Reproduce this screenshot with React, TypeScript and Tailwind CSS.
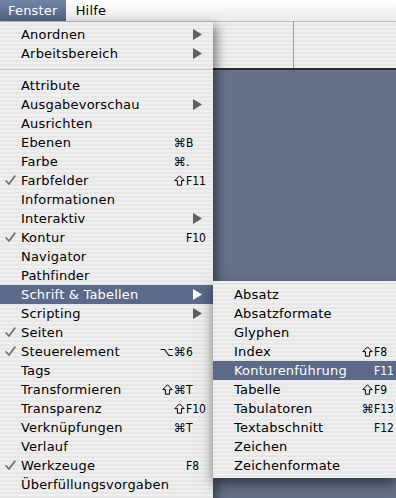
import React from 'react';

interface MenuItem {
  label: string;
  check?: boolean;
  arrow?: boolean;
  mod?: string;
  keyName?: string;
  sepBefore?: boolean;
  active?: boolean;
}

const mainItems: MenuItem[] = [
  { label: 'Anordnen', arrow: true },
  { label: 'Arbeitsbereich', arrow: true },
  { label: 'Attribute', sepBefore: true },
  { label: 'Ausgabevorschau', arrow: true },
  { label: 'Ausrichten' },
  { label: 'Ebenen', mod: '⌘', keyName: 'B' },
  { label: 'Farbe', mod: '⌘', keyName: '.' },
  { label: 'Farbfelder', check: true, mod: '⇧', keyName: 'F11' },
  { label: 'Informationen' },
  { label: 'Interaktiv', arrow: true },
  { label: 'Kontur', check: true, keyName: 'F10' },
  { label: 'Navigator' },
  { label: 'Pathfinder' },
  { label: 'Schrift & Tabellen', arrow: true, active: true },
  { label: 'Scripting', arrow: true },
  { label: 'Seiten', check: true },
  { label: 'Steuerelement', check: true, mod: '⌥⌘', keyName: '6' },
  { label: 'Tags' },
  { label: 'Transformieren', mod: '⇧⌘', keyName: 'T' },
  { label: 'Transparenz', mod: '⇧', keyName: 'F10' },
  { label: 'Verknüpfungen', mod: '⌘', keyName: 'T' },
  { label: 'Verlauf' },
  { label: 'Werkzeuge', check: true, keyName: 'F8' },
  { label: 'Überfüllungsvorgaben' },
];

const subItems: MenuItem[] = [
  { label: 'Absatz' },
  { label: 'Absatzformate' },
  { label: 'Glyphen' },
  { label: 'Index', mod: '⇧', keyName: 'F8' },
  { label: 'Konturenführung', keyName: 'F11', active: true },
  { label: 'Tabelle', mod: '⇧', keyName: 'F9' },
  { label: 'Tabulatoren', mod: '⌘', keyName: 'F13' },
  { label: 'Textabschnitt', keyName: 'F12' },
  { label: 'Zeichen' },
  { label: 'Zeichenformate' },
];

const stripes =
  'bg-[image:repeating-linear-gradient(180deg,#efefef_0px,#efefef_2px,#e7e7e7_2px,#e7e7e7_4px)]';

const Check = ({ active }: { active?: boolean }) => (
  <svg width="11" height="11" viewBox="0 0 11 11" className="ml-[5px]">
    <path
      d="M1.2 6 L4 9 L9.8 1.2"
      fill="none"
      stroke={active ? '#fff' : '#707070'}
      strokeWidth="1.8"
      strokeLinecap="round"
      strokeLinejoin="round"
    />
  </svg>
);

const Arrow = ({ active }: { active?: boolean }) => (
  <svg width="9" height="11" viewBox="0 0 9 11" className="ml-[7px]">
    <polygon points="0,0 9,5.5 0,11" fill={active ? '#fff' : '#5f5f5f'} />
  </svg>
);

// outline shift arrow, as drawn in classic Mac menus
const Shift = ({ active }: { active?: boolean }) => (
  <svg width="11" height="11" viewBox="0 0 11 11" className="mr-[1px]">
    <path
      d="M5.5 0.8 L10.2 5.6 L7.6 5.6 L7.6 10.2 L3.4 10.2 L3.4 5.6 L0.8 5.6 Z"
      fill="none"
      stroke={active ? '#fff' : '#000'}
      strokeWidth="1"
      strokeLinejoin="miter"
    />
  </svg>
);

const Modifiers = ({ mod, active }: { mod: string; active?: boolean }) => (
  <span className="flex items-center text-[12px]">
    {mod.split('').map((m, i) =>
      m === '⇧' ? <Shift key={i} active={active} /> : <span key={i}>{m}</span>
    )}
  </span>
);

const Row = ({ item, keyWidth }: { item: MenuItem; keyWidth: string }) => (
  <div
    className={`flex h-[19px] items-center whitespace-nowrap ${
      item.active ? 'bg-[#5a6a88] text-white' : 'text-black'
    }`}
  >
    <div className="w-[21px] shrink-0">{item.check && <Check active={item.active} />}</div>
    <div className="flex-1">{item.label}</div>
    {item.mod && <Modifiers mod={item.mod} active={item.active} />}
    <div
      className={`${keyWidth} shrink-0 flex items-center font-['DejaVu_Sans_Condensed','DejaVu_Sans',sans-serif] text-[12px] tracking-normal`}
    >
      {item.keyName && <span>{item.keyName}</span>}
      {item.arrow && <Arrow active={item.active} />}
    </div>
  </div>
);

export default function App() {
  return (
    <div className="relative w-[396px] h-[498px] overflow-hidden bg-[#66718a] font-['DejaVu_Sans',sans-serif] text-[13px] tracking-[0.2px]">
      {/* menu bar */}
      <div className="flex h-[22px] items-center bg-gradient-to-b from-[#ffffff] to-[#e9e9e9] border-b border-[#bdbdbd]">
        <div className="h-full px-[8px] leading-[22px] text-white bg-gradient-to-b from-[#7184a6] to-[#4f6283]">
          Fenster
        </div>
        <div className="pl-[10px] leading-[22px] text-black">Hilfe</div>
      </div>

      {/* window toolbar behind menus */}
      <div className={`flex h-[48px] border-b-2 border-[#2a2a2a] ${stripes}`}>
        <div className="w-[294px] border-r border-[#9a9a9a]" />
        <div className="flex-1" />
      </div>

      {/* main menu */}
      <div
        className={`absolute left-0 top-[22px] w-[213px] h-[490px] pt-[3px] shadow-[4px_4px_10px_rgba(0,0,0,0.45)] ${stripes}`}
      >
        {mainItems.map((item) => (
          <React.Fragment key={item.label}>
            {item.sepBefore && (
              <div className="h-[13px] flex items-center">
                <div className="w-full h-px bg-[#c9c9c9]" />
              </div>
            )}
            <Row item={item} keyWidth="w-[27px]" />
          </React.Fragment>
        ))}
      </div>

      {/* submenu */}
      <div
        className={`absolute left-[213px] top-[281px] w-[183px] pt-[4px] pb-[3px] shadow-[0px_6px_12px_rgba(0,0,0,0.5)] ${stripes}`}
      >
        {subItems.map((item) => (
          <Row key={item.label} item={item} keyWidth="w-[22px]" />
        ))}
      </div>
    </div>
  );
}
